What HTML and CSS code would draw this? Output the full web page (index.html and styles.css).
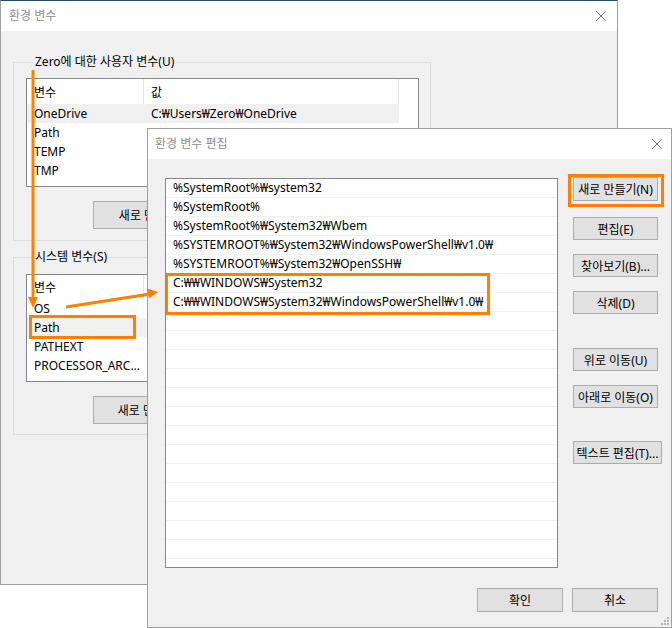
FILE: index.html
```html
<!DOCTYPE html>
<html lang="ko">
<head>
<meta charset="utf-8">
<title>환경 변수</title>
<link rel="stylesheet" href="styles.css">
</head>
<body>
<div class="desk">
  <div class="win back">
    <div class="titlebar">
      <span class="title">환경 변수</span>
      <svg class="close" width="12" height="12" viewBox="0 0 12 12"><path d="M1 1L11 11M11 1L1 11" stroke="#777" stroke-width="1" fill="none"/></svg>
    </div>
    <div class="back-body">
      <fieldset class="group g1">
        <legend>Zero에 대한 사용자 변수(U)</legend>
        <div class="lv">
          <div class="lv-head tall"><div class="c1">변수</div><div class="c2">값</div></div>
          <div class="lv-row sel"><div class="c1">OneDrive</div><div class="c2">C:₩Users₩Zero₩OneDrive</div></div>
          <div class="lv-row"><div class="c1">Path</div><div class="c2"></div></div>
          <div class="lv-row"><div class="c1">TEMP</div><div class="c2"></div></div>
          <div class="lv-row"><div class="c1">TMP</div><div class="c2"></div></div>
        </div>
        <div class="btn back-btn">새로 만들기(N)...</div>
      </fieldset>
      <fieldset class="group g2">
        <legend>시스템 변수(S)</legend>
        <div class="lv lv2">
          <div class="lv-head"><div class="c1">변수</div><div class="c2">값</div></div>
          <div class="lv-row"><div class="c1">OS</div><div class="c2"></div></div>
          <div class="lv-row sel"><div class="c1">Path</div><div class="c2"></div></div>
          <div class="lv-row"><div class="c1">PATHEXT</div><div class="c2"></div></div>
          <div class="lv-row"><div class="c1">PROCESSOR_ARC...</div><div class="c2"></div></div>
          <div class="mark mark-path"></div>
        </div>
        <div class="btn back-btn">새로 만들기(W)...</div>
      </fieldset>
    </div>
  </div>

  <div class="win front">
    <div class="titlebar ftitle">
      <span class="title">환경 변수 편집</span>
      <svg class="close" width="12" height="12" viewBox="0 0 12 12"><path d="M1 1L11 11M11 1L1 11" stroke="#777" stroke-width="1" fill="none"/></svg>
    </div>
    <div class="front-body">
      <div class="top-row">
        <div class="plist">
          <div class="prow">%SystemRoot%₩system32</div>
          <div class="prow">%SystemRoot%</div>
          <div class="prow">%SystemRoot%₩System32₩Wbem</div>
          <div class="prow">%SYSTEMROOT%₩System32₩WindowsPowerShell₩v1.0₩</div>
          <div class="prow">%SYSTEMROOT%₩System32₩OpenSSH₩</div>
          <div class="prow">C:₩₩WINDOWS₩System32</div>
          <div class="prow">C:₩₩WINDOWS₩System32₩WindowsPowerShell₩v1.0₩</div>
          <div class="prow"></div><div class="prow"></div><div class="prow"></div>
          <div class="prow"></div><div class="prow"></div><div class="prow"></div>
          <div class="prow"></div><div class="prow"></div><div class="prow"></div>
          <div class="prow"></div><div class="prow"></div><div class="prow"></div>
          <div class="prow"></div><div class="prow"></div>
          <div class="mark mark-list"></div>
        </div>
        <div class="btn-col">
          <div class="btn b-new">새로 만들기(N)<span class="mark mark-new"></span></div>
          <div class="btn b-edit">편집(E)</div>
          <div class="btn b-browse">찾아보기(B)...</div>
          <div class="btn b-del">삭제(D)</div>
          <div class="btn b-up">위로 이동(U)</div>
          <div class="btn b-down">아래로 이동(O)</div>
          <div class="btn b-text">텍스트 편집(T)...</div>
        </div>
      </div>
      <div class="bottom-row">
        <div class="btn b-ok">확인</div>
        <div class="btn b-ok">취소</div>
      </div>
    </div>
    <svg class="grip" width="9" height="9" viewBox="0 0 9 9">
      <rect x="6" y="0" width="2" height="2" fill="#b5b5b5"/>
      <rect x="3" y="3" width="2" height="2" fill="#b5b5b5"/>
      <rect x="6" y="3" width="2" height="2" fill="#b5b5b5"/>
      <rect x="0" y="6" width="2" height="2" fill="#b5b5b5"/>
      <rect x="3" y="6" width="2" height="2" fill="#b5b5b5"/>
      <rect x="6" y="6" width="2" height="2" fill="#b5b5b5"/>
    </svg>
  </div>

  <svg class="arrows" width="672" height="628" viewBox="0 0 672 628">
    <line x1="33" y1="70" x2="33" y2="299" stroke="#ff8000" stroke-width="3"/>
    <polygon points="28,297 38,297 33,308" fill="#ff8000"/>
    <line x1="66" y1="307" x2="150" y2="294" stroke="#ff8000" stroke-width="3"/>
    <polygon points="158,292 147.3,288.5 149,298.6" fill="#ff8000"/>
  </svg>
</div>
</body>
</html>
```

FILE: styles.css
```css
* { box-sizing: border-box; }
html, body { margin: 0; padding: 0; background: #fff; }
body {
  font-family: "Noto Sans", "Noto Sans CJK KR", sans-serif;
  font-size: 12px;
  color: #000;
}
.desk {
  position: relative;
  width: 672px;
  height: 628px;
  overflow: hidden;
  background: #fff;
}
.win {
  position: absolute;
  display: flex;
  flex-direction: column;
  background: #f0f0f0;
  border: 1px solid #a0a0a0;
}
.back {
  left: 0;
  top: 0;
  width: 618px;
  height: 585px;
  border-top-color: #2b4a6a;
}
.front {
  left: 147px;
  top: 128px;
  width: 525px;
  height: 500px;
}
.titlebar {
  height: 30px;
  flex: none;
  background: #fff;
  display: flex;
  align-items: center;
  justify-content: space-between;
  padding: 0 10px 0 8px;
}
.ftitle { padding: 0 8px 0 7px; }
.title {
  color: #8f8f8f;
  font-size: 12px;
  line-height: 16px;
}
.close { display: block; }

/* back window */
.back-body {
  padding: 23px 0 0 12px;
  display: flex;
  flex-direction: column;
}
.group {
  margin: 0;
  width: 418px;
  border: 1px solid #dcdcdc;
  padding: 8px 0 11px 12px;
  min-width: 0;
}
.g2 { margin-top: 8px; padding-top: 9px; padding-bottom: 10px; }
.group legend {
  margin-left: 7px;
  padding: 0 2px;
  line-height: 16px;
  font-size: 12px;
  color: #000;
}
.lv {
  position: relative;
  width: 393px;
  height: 109px;
  background: #fff;
  border: 1px solid #828790;
  overflow: hidden;
}
.lv2 { height: 108px; }
.lv-head, .lv-row {
  display: flex;
  height: 19px;
  align-items: center;
}
.lv-head { height: 24px; }
.lv-head.tall { height: 25px; }
.lv-head .c1, .lv-head .c2 {
  height: 100%;
  display: flex;
  align-items: center;
  border-right: 1px solid #e5e5e5;
}
.c1 { width: 117px; padding-left: 7px; flex: none; white-space: nowrap; }
.c2 { width: 255px; padding-left: 7px; flex: none; white-space: nowrap; }
.lv-row .c1, .lv-row .c2 { line-height: 19px; height: 19px; }
.lv-row.sel .c1, .lv-row.sel .c2 { background: #f0f0f0; }
.btn {
  display: flex;
  align-items: center;
  justify-content: center;
  background: #e1e1e1;
  border: 1px solid #adadad;
  height: 23px;
  white-space: nowrap;
  font-size: 12px;
  position: relative;
}
.back-btn {
  margin: 14px 0 0 67px;
  width: 136px;
  height: 28px;
}
.mark {
  position: absolute;
  border: 3px solid #ff8000;
  pointer-events: none;
}
.mark-path { left: 2px; top: 40px; width: 107px; height: 24px; }

/* front window */
.front-body {
  flex: 1;
  display: flex;
  flex-direction: column;
  padding: 19px 13px 0 17px;
}
.top-row {
  display: flex;
  gap: 15px;
}
.plist {
  position: relative;
  width: 393px;
  height: 390px;
  background: #fff;
  border: 1px solid #828790;
  overflow: hidden;
  flex: none;
}
.prow {
  height: 19px;
  border-bottom: 1px solid #f0f0f0;
  padding-left: 7px;
  line-height: 18px;
  white-space: nowrap;
}
.mark-list { left: -1px; top: 94px; width: 325px; height: 42px; }
.btn-col {
  display: flex;
  flex-direction: column;
  padding-top: 0;
}
.btn-col .btn { width: 85px; }
.b-new { margin-top: -1px; height: 24px; }
.mark-new { left: -6px; top: -4px; width: 96px; height: 33px; }
.b-edit { margin-top: 16px; }
.b-browse, .b-del, .b-down { margin-top: 14px; }
.b-up { margin-top: 34px; }
.btn-col .b-text { margin-top: 33px; width: 89px; }
.bottom-row {
  display: flex;
  justify-content: flex-end;
  gap: 9px;
  margin-top: 20px;
}
.b-ok { width: 86px; height: 24px; }
.grip {
  position: absolute;
  right: 1px;
  bottom: 1px;
}
.arrows {
  position: absolute;
  left: 0;
  top: 0;
  pointer-events: none;
}
```
